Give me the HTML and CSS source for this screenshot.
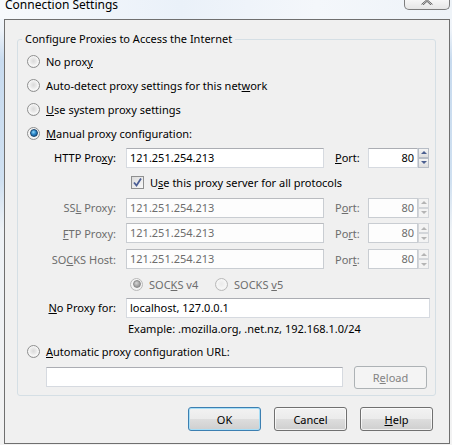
FILE: index.html
```html
<!DOCTYPE html>
<html>
<head>
<meta charset="utf-8">
<link rel="stylesheet" href="styles.css">
</head>
<body>
<div class="titlebar">
  <span class="title">Connection Settings</span>
  <span class="close"><svg width="14" height="5" viewBox="0 0 14 5"><path d="M2 5 L7 0.5 L12 5" fill="none" stroke="#4a4a4a" stroke-width="2"/><path d="M2 5 L7 0.5 L12 5" fill="none" stroke="#fff" stroke-width="0.8"/></svg></span>
</div>
<div class="dialog">
  <div class="group">
    <span class="legend">Configure Proxies to Access the Internet</span>
    <div class="opt"><span class="radio"></span><span>No prox<u>y</u></span></div>
    <div class="opt"><span class="radio"></span><span>Auto-detect proxy settings for this net<u>w</u>ork</span></div>
    <div class="opt"><span class="radio"></span><span><u>U</u>se system proxy settings</span></div>
    <div class="opt"><span class="radio on"></span><span><u>M</u>anual proxy configuration:</span></div>

    <div class="row h25">
      <span class="lbl">HTTP Pro<u>x</u>y:</span>
      <span class="field">121.251.254.213</span>
      <span class="plbl"><u>P</u>ort:</span>
      <span class="port">80</span>
      <span class="spin"><span class="sb"><i class="up"></i></span><span class="sb"><i class="dn"></i></span></span>
    </div>
    <div class="row h25">
      <span class="check"><svg width="11" height="11" viewBox="0 0 11 11"><path d="M2 5.5 L4.5 8.5 L9 1.5" fill="none" stroke="#4b5e95" stroke-width="1.8"/></svg></span>
      <span>U<u>s</u>e this proxy server for all protocols</span>
    </div>
    <div class="row h25 off">
      <span class="lbl">SS<u>L</u> Proxy:</span>
      <span class="field">121.251.254.213</span>
      <span class="plbl">P<u>o</u>rt:</span>
      <span class="port">80</span>
      <span class="spin"><span class="sb"><i class="up"></i></span><span class="sb"><i class="dn"></i></span></span>
    </div>
    <div class="row h26 off">
      <span class="lbl"><u>F</u>TP Proxy:</span>
      <span class="field">121.251.254.213</span>
      <span class="plbl">Po<u>r</u>t:</span>
      <span class="port">80</span>
      <span class="spin"><span class="sb"><i class="up"></i></span><span class="sb"><i class="dn"></i></span></span>
    </div>
    <div class="row h26 off">
      <span class="lbl">SO<u>C</u>KS Host:</span>
      <span class="field">121.251.254.213</span>
      <span class="plbl">Por<u>t</u>:</span>
      <span class="port">80</span>
      <span class="spin"><span class="sb"><i class="up"></i></span><span class="sb"><i class="dn"></i></span></span>
    </div>
    <div class="row h24 off socks">
      <span class="radio on"></span><span class="sv4">SOC<u>K</u>S v4</span>
      <span class="radio"></span><span>SOCKS <u>v</u>5</span>
    </div>
    <div class="row h23">
      <span class="lbl"><u>N</u>o Proxy for:</span>
      <span class="field wide">localhost, 127.0.0.1</span>
    </div>
    <div class="row h19 example">Example: .mozilla.org, .net.nz, 192.168.1.0/24</div>
    <div class="opt h26"><span class="radio"></span><span><u>A</u>utomatic proxy configuration URL:</span></div>
    <div class="row h26 urlrow">
      <span class="field url"></span>
      <span class="btn disabled">R<u>e</u>load</span>
    </div>
  </div>
  <div class="buttons">
    <span class="btn default">OK</span>
    <span class="btn">Cancel</span>
    <span class="btn"><u>H</u>elp</span>
  </div>
</div>
</body>
</html>
```
FILE: styles.css
```css
* { box-sizing: border-box; margin: 0; padding: 0; }
html, body { width: 452px; height: 445px; overflow: hidden; }
body {
  font-family: "Noto Sans", "Open Sans", sans-serif;
  font-size: 11px;
  color: #000;
  background:
    linear-gradient(to bottom, #f4f7fb 0px, #eef3f9 30px, #c8dbef 60px, #cfe0f1 180px, #eef2f6 230px, #f2f2f2 445px);
}
.titlebar {
  height: 19px;
  display: flex;
  justify-content: space-between;
  align-items: flex-start;
  background: linear-gradient(to right, #f7f9fc, #eaf1f9 40%, #f4f7fb 70%, #eef3f8);
}
.title {
  margin: 0 0 0 5px;
  font-size: 12px;
  line-height: 10px;
  color: #000;
}
.close {
  width: 46px;
  height: 10px;
  margin-right: 2px;
  border: 1px solid #7d7d7d;
  border-top: none;
  border-radius: 0 0 5px 5px;
  background: linear-gradient(#f6f6f6, #e6e6e6);
  display: flex;
  justify-content: center;
  align-items: flex-start;
}
.close svg { display: block; }
.dialog {
  margin-left: 4px;
  width: 446px;
  height: 425px;
  border: 1px solid #6f6f6f;
  background: #f0f0f0;
  padding: 19px 13px 0 12px;
  display: flex;
  flex-direction: column;
}
.group {
  height: 357px;
  border: 1px solid #d5dfe5;
  border-radius: 3px;
  padding: 0 0 0 9px;
  display: flex;
  flex-direction: column;
}
.legend {
  display: block;
  width: fit-content;
  margin: -9px 0 2px -5px;
  padding: 0 3px;
  line-height: 16px;
  background: #f0f0f0;
}
.opt {
  height: 24px;
  display: flex;
  align-items: center;
  gap: 6px;
}
.row {
  display: flex;
  align-items: center;
}
.h19 { height: 19px; }
.h23 { height: 23px; }
.h24 { height: 24px; }
.h25 { height: 25px; }
.h26 { height: 26px; }
.off { color: #6d6d6d; }
.radio {
  flex: none;
  width: 13px;
  height: 13px;
  border-radius: 50%;
  border: 1px solid #8e8f8f;
  background: radial-gradient(circle at 50% 45%, #d9d9d9 0, #eeeeee 45%, #f8f8f8 60%, #d2d2d2 100%);
  display: flex;
  align-items: center;
  justify-content: center;
}
.radio.on::after {
  content: "";
  width: 6px;
  height: 6px;
  border-radius: 50%;
  border: 1px solid #17456f;
  background: radial-gradient(circle at 40% 35%, #8fd6f8 0, #2b86c9 45%, #0c4579 100%);
}
.off .radio { border-color: #b9b9b9; background: radial-gradient(circle at 50% 45%, #eaeaea 0, #f6f6f6 55%, #e4e4e4 100%); }
.off .radio.on::after {
  border-color: #8a8a8a;
  background: radial-gradient(circle at 40% 35%, #d6d6d6 0, #a9a9a9 50%, #858585 100%);
}
.lbl {
  width: 89px;
  text-align: right;
  flex: none;
}
.field {
  flex: none;
  margin-left: 10px;
  width: 198px;
  height: 20px;
  line-height: 18px;
  padding: 0 3px;
  background: #fff;
  border: 1px solid #d6dae0;
  border-top-color: #abadb3;
}
.off .field { background: #fdfdfd; border-color: #c9cdd2; border-top-color: #b9bbbf; }
.field.wide { width: 304px; }
.plbl {
  flex: none;
  margin-left: 11px;
  width: 33px;
}
.port {
  flex: none;
  width: 50px;
  height: 20px;
  line-height: 18px;
  text-align: right;
  padding-right: 3px;
  background: #fff;
  border: 1px solid #d6dae0;
  border-top-color: #abadb3;
}
.off .port { background: #fdfdfd; border-color: #c9cdd2; }
.spin {
  flex: none;
  width: 11px;
  height: 20px;
  display: flex;
  flex-direction: column;
}
.sb {
  height: 10px;
  border: 1px solid #b7bdc6;
  background: linear-gradient(#f5f5f5, #dedede);
  display: flex;
  align-items: center;
  justify-content: center;
}
.sb i { width: 0; height: 0; border-left: 3px solid transparent; border-right: 3px solid transparent; }
.sb .up { border-bottom: 3px solid #4b5f8f; }
.sb .dn { border-top: 3px solid #4b5f8f; }
.off .sb { border-color: #d3d6da; background: #f3f3f3; }
.off .sb .up { border-bottom-color: #b4b4b4; }
.off .sb .dn { border-top-color: #b4b4b4; }
.check {
  flex: none;
  margin-left: 104px;
  margin-right: 6px;
  width: 13px;
  height: 13px;
  border: 1px solid #8e8f8f;
  background: linear-gradient(135deg, #dcdcdc, #f9f9f9);
  display: flex;
  align-items: center;
  justify-content: center;
}
.check svg { display: block; }
.socks .radio:first-child { margin-left: 103px; }
.socks .radio { margin-right: 6px; }
.sv4 { width: 66px; }
.example { padding-left: 101px; }
.urlrow { padding-left: 19px; }
.field.url { margin-left: 0; width: 297px; }
.btn {
  flex: none;
  width: 73px;
  height: 24px;
  display: flex;
  align-items: center;
  justify-content: center;
  border: 1px solid #707070;
  border-radius: 3px;
  background: linear-gradient(#f2f2f2 0%, #ebebeb 50%, #dddddd 51%, #cfcfcf 100%);
  box-shadow: inset 0 0 0 1px rgba(255,255,255,0.7);
}
.btn.default {
  border-color: #3c7fb1;
  box-shadow: inset 0 0 0 1px #a7def7;
}
.btn.disabled {
  margin-left: 11px;
  height: 23px;
  color: #838383;
  border-color: #adb2b5;
  background: #f4f4f4;
  box-shadow: none;
}
.buttons {
  margin-top: 11px;
  padding-right: 3px;
  display: flex;
  justify-content: flex-end;
  gap: 13px;
}
```
